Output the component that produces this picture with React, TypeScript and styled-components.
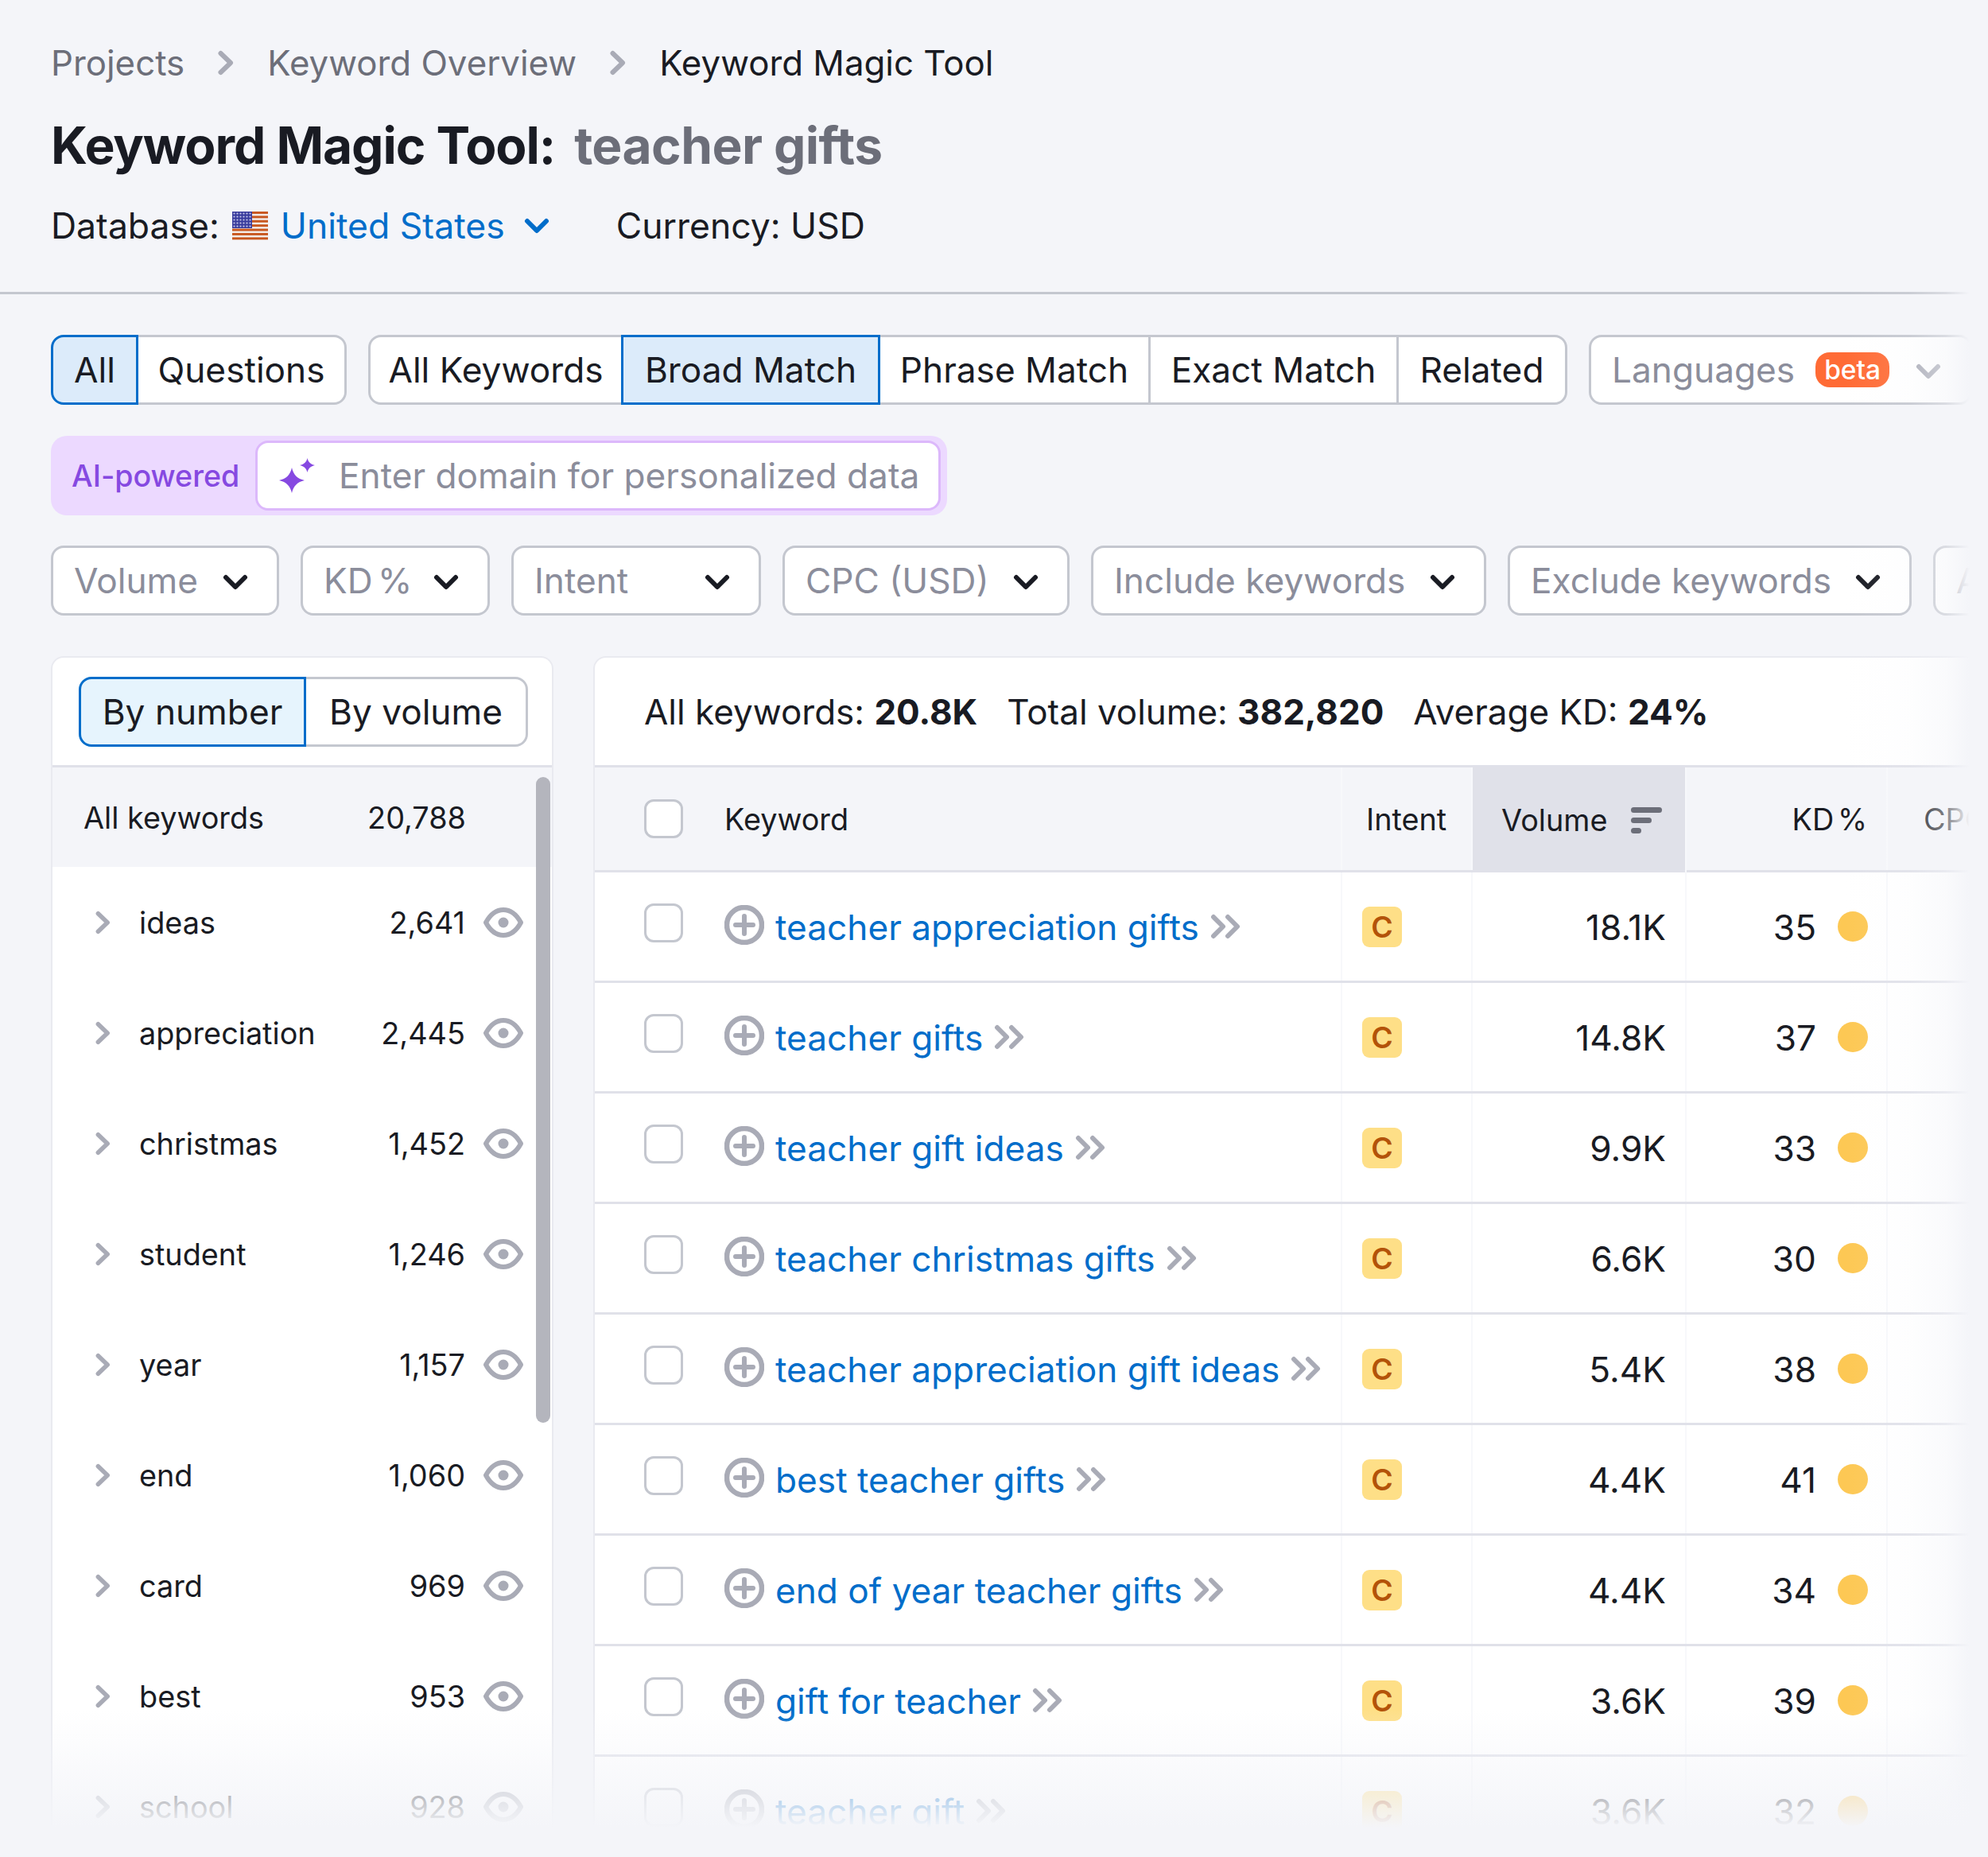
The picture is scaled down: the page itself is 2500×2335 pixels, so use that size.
import React from "react";
import styled, { createGlobalStyle } from "styled-components";

const INK = "#191b23";
const MUTED = "#6c6e79";
const HINT = "#8b8d9b";
const ICON = "#a9abb6";
const LINK = "#006dca";
const LINE = "#c4c7cf";
const SOFT = "#e0e1e9";
const BG = "#f4f5f9";
const BODY = "44.2px";
const SMALL = "37.8px";

const Global = createGlobalStyle`
  html, body { margin: 0; padding: 0; background: ${BG}; }
  body { font-family: Inter, "Liberation Sans", sans-serif; color: ${INK}; }
  * { box-sizing: border-box; }
`;

const Page = styled.div`
  position: relative;
  width: 2500px;
  height: 2335px;
  overflow: hidden;
  background: ${BG};
`;

const Header = styled.header`
  padding: 49px 0 53px 64px;
  border-bottom: 3px solid ${LINE};
`;

const Breadcrumbs = styled.nav`
  display: flex;
  align-items: center;
  height: 60px;
  font-size: 43.8px;
  gap: 42px;
`;

const Crumb = styled.span<{ $current?: boolean }>`
  color: ${(p) => (p.$current ? INK : MUTED)};
`;

const Title = styled.h1`
  display: flex;
  align-items: center;
  gap: 24px;
  height: 80px;
  margin: 33px 0 32px;
  font-size: 64px;
  font-weight: 700;
  letter-spacing: -1.05px;
`;

const TitleQuery = styled.span`
  color: ${MUTED};
  font-weight: 700;
  letter-spacing: -0.6px;
`;

const DbRow = styled.div`
  display: flex;
  align-items: center;
  height: 60px;
  font-size: 44.5px;
`;

const DbLink = styled.span`
  color: ${LINK};
  margin: 0 24px 0 16px;
`;

const FlagBox = styled.span`
  display: inline-flex;
  margin-left: 16px;
`;

const Currency = styled.span`
  margin-left: 84px;
`;

const Toolbar = styled.section`
  display: flex;
  flex-direction: column;
  padding: 51px 0 0 64px;
`;

const ToolRow = styled.div<{ $gap: number; $mb: number }>`
  display: flex;
  gap: ${(p) => p.$gap}px;
  margin-bottom: ${(p) => p.$mb}px;
`;

const SegGroup = styled.div`
  display: flex;
  height: 88px;
`;

const Seg = styled.div<{ $w: number; $active?: boolean; $tint?: string }>`
  position: relative;
  z-index: ${(p) => (p.$active ? 1 : 0)};
  display: flex;
  align-items: center;
  justify-content: center;
  width: ${(p) => p.$w}px;
  height: 100%;
  background: ${(p) => (p.$active ? p.$tint ?? "#dcebfa" : "#fff")};
  border: 3px solid ${(p) => (p.$active ? LINK : LINE)};
  font-size: ${BODY};
  color: ${INK};
  &:not(:first-child) { margin-left: -3px; }
  &:first-child { border-radius: 16px 0 0 16px; }
  &:last-child { border-radius: 0 16px 16px 0; }
`;

const Select = styled.div<{ $w: number }>`
  display: flex;
  align-items: center;
  justify-content: space-between;
  flex: none;
  width: ${(p) => p.$w}px;
  height: 88px;
  padding: 0 36px 0 26px;
  background: #fff;
  border: 3px solid ${LINE};
  border-radius: 16px;
  font-size: ${BODY};
  color: ${HINT};
  white-space: nowrap;
  svg { margin-top: 4px; }
`;

const TightLabel = styled.span<{ $tight?: boolean }>`
  word-spacing: ${(p) => (p.$tight ? "-6px" : "0")};
  white-space: nowrap;
`;

const LangLabel = styled.span`
  display: flex;
  align-items: center;
  gap: 26px;
`;

const Beta = styled.span`
  display: inline-flex;
  align-items: center;
  justify-content: center;
  width: 93px;
  height: 44px;
  border-radius: 18px;
  background: #ff6b35;
  color: #fff;
  font-size: 33.5px;
  font-weight: 500;
`;

const AiBox = styled.div`
  display: inline-flex;
  align-items: center;
  align-self: flex-start;
  width: 1127px;
  height: 100px;
  margin-bottom: 38px;
  padding: 0 8px 0 26px;
  background: #ecd9ff;
  border-radius: 20px;
`;

const AiLabel = styled.span`
  width: 231px;
  font-size: 37.6px;
  font-weight: 500;
  color: #8649e1;
`;

const AiInput = styled.div`
  display: flex;
  align-items: center;
  gap: 30px;
  width: 862px;
  height: 88px;
  padding-left: 27px;
  background: #fff;
  border: 3px solid #dcb8fb;
  border-radius: 16px;
  font-size: ${BODY};
  color: ${HINT};
  white-space: nowrap;
`;

const Panels = styled.main`
  display: flex;
  gap: 50px;
  margin: 0 0 0 64px;
  height: 1480px;
`;

const Sidebar = styled.aside`
  position: relative;
  flex: none;
  width: 632px;
  background: #fff;
  border: 2px solid #e9eaf0;
  border-bottom: none;
  border-radius: 16px 16px 0 0;
`;

const SideTop = styled.div`
  display: flex;
  height: 138px;
  padding: 24px 0 0 33px;
  border-bottom: 3px solid ${SOFT};
`;

const ScrollThumb = styled.div`
  position: absolute;
  top: 150px;
  right: 2px;
  width: 18px;
  height: 812px;
  border-radius: 9px;
  background: #b4b5bd;
`;

const AllRow = styled.div`
  display: grid;
  grid-template-columns: 1fr auto;
  align-items: center;
  height: 125px;
  padding: 0 108px 0 39px;
  background: ${BG};
  font-size: ${SMALL};
`;

const SideRow = styled.div`
  display: grid;
  grid-template-columns: 19px 1fr auto 49px;
  align-items: center;
  height: 139px;
  padding-left: 54px;
  padding-right: 37px;
  font-size: ${SMALL};
`;

const SideWord = styled.span`
  margin-left: 36px;
`;

const SideCount = styled.span`
  margin-right: 23px;
`;

const Main = styled.section`
  flex: 1;
  min-width: 0;
  background: #fff;
  border: 2px solid #e9eaf0;
  border-bottom: none;
  border-right: none;
  border-radius: 16px 0 0 0;
`;

const Summary = styled.div`
  display: flex;
  align-items: center;
  gap: 37px;
  height: 138px;
  padding-left: 62px;
  border-bottom: 3px solid ${SOFT};
  font-size: 44px;
`;

const Strong = styled.b`
  font-weight: 700;
`;

const TableRow = styled.div<{ $head?: boolean }>`
  display: grid;
  grid-template-columns: 940px 164px 269px 253px 1fr;
  height: ${(p) => (p.$head ? 132 : 139)}px;
  border-bottom: 3px solid ${SOFT};
  background: ${(p) => (p.$head ? BG : "#fff")};
  font-size: ${(p) => (p.$head ? SMALL : BODY)};
`;

const Cell = styled.div<{ $right?: boolean; $pad?: number; $sorted?: boolean }>`
  display: flex;
  align-items: center;
  min-width: 0;
  white-space: nowrap;
  overflow: hidden;
  justify-content: ${(p) => (p.$right ? "flex-end" : "flex-start")};
  padding: ${(p) =>
    p.$right ? `0 ${p.$pad ?? 0}px 0 0` : `0 0 0 ${p.$pad ?? 0}px`};
  border-right: 2px solid #f7f8fb;
  background: ${(p) => (p.$sorted ? SOFT : "transparent")};
  ${(p) => (p.$sorted ? "margin-bottom: -3px;" : "")}
`;

const CheckBox = styled.span<{ $nudge?: number }>`
  flex: none;
  width: 49px;
  height: 49px;
  margin-right: 52px;
  margin-bottom: ${(p) => p.$nudge ?? 0}px;
  background: #fff;
  border: 3px solid ${LINE};
  border-radius: 12px;
`;

const KeywordLink = styled.span`
  margin: 0 14px 0 14px;
  padding-top: 2px;
  color: ${LINK};
  white-space: nowrap;
`;

const ValueText = styled.span`
  padding-top: 2px;
`;

const IconSlot = styled.span<{ $nudge?: number }>`
  display: inline-flex;
  flex: none;
  margin-bottom: ${(p) => p.$nudge ?? 0}px;
`;

const IntentBadge = styled.span`
  display: flex;
  align-items: center;
  justify-content: center;
  width: 50px;
  height: 51px;
  border-radius: 9px;
  background: #fedf87;
  color: #b35309;
  font-size: 37.33px;
  font-weight: 600;
`;

const KdDot = styled.span`
  width: 38px;
  height: 38px;
  margin-left: 27px;
  border-radius: 50%;
  background: #fdc854;
`;

const SortedHead = styled.div`
  display: flex;
  align-items: center;
  justify-content: space-between;
  width: 100%;
  padding: 0 28px 0 36px;
`;

const RightFade = styled.div`
  position: absolute;
  top: 0;
  right: 0;
  bottom: 0;
  width: 180px;
  background: linear-gradient(
    to right,
    rgba(244, 245, 249, 0),
    rgba(244, 245, 249, 0.12) 45%,
    rgba(244, 245, 249, 0.45) 70%,
    ${BG} 87%
  );
  pointer-events: none;
`;

const BottomFade = styled.div`
  position: absolute;
  left: 0;
  right: 0;
  bottom: 0;
  height: 185px;
  background: linear-gradient(to bottom, rgba(244, 245, 249, 0), ${BG} 80%);
  pointer-events: none;
`;

const ChevronRight = ({ w = 20, h = 32 }: { w?: number; h?: number }) => (
  <svg width={w} height={h} viewBox="0 0 20 32" fill="none">
    <path d="M3.5 4 L16 16 L3.5 28" stroke={ICON} strokeWidth="6" strokeLinecap="round" strokeLinejoin="round" />
  </svg>
);

const ChevronDown = ({ color = INK }: { color?: string }) => (
  <svg width="32" height="20" viewBox="0 0 32 20" fill="none">
    <path d="M4 4 L16 16 L28 4" stroke={color} strokeWidth="6" strokeLinecap="round" strokeLinejoin="round" />
  </svg>
);

const DoubleChevron = () => (
  <svg width="40" height="32" viewBox="0 0 40 32" fill="none">
    <path d="M4 4 L16 16 L4 28 M22 4 L34 16 L22 28" stroke={ICON} strokeWidth="6" strokeLinecap="round" strokeLinejoin="round" />
  </svg>
);

const PlusCircle = () => (
  <svg width="50" height="50" viewBox="0 0 50 50" fill="none">
    <circle cx="25" cy="25" r="22" stroke={ICON} strokeWidth="6.5" />
    <path d="M25 14 V36 M14 25 H36" stroke={ICON} strokeWidth="6" strokeLinecap="round" />
  </svg>
);

const Eye = () => (
  <svg width="50" height="38" viewBox="0 0 50 38" fill="none">
    <path d="M3 19 C9 8 16 3 25 3 C34 3 41 8 47 19 C41 30 34 35 25 35 C16 35 9 30 3 19 Z" stroke={ICON} strokeWidth="6" strokeLinejoin="round" />
    <circle cx="25" cy="19" r="6.5" fill={ICON} />
  </svg>
);

const SortIcon = () => (
  <svg width="40" height="33" viewBox="0 0 40 33" fill={MUTED}>
    <rect x="0" y="0" width="39" height="7" rx="3.5" />
    <rect x="0" y="13" width="26" height="7" rx="3.5" />
    <rect x="0" y="26" width="13" height="7" rx="3.5" />
  </svg>
);

const Sparkle = () => (
  <svg width="45" height="44" viewBox="0 0 45 44" fill="#8649e1">
    <path d="M16 12 C18 21 23 26 32 28 C23 30 18 35 16 44 C14 35 9 30 0 28 C9 26 14 21 16 12 Z" />
    <path d="M35.5 0 C36.5 5 40 8 45 9 C40 10 36.5 13 35.5 18 C34.5 13 31 10 26 9 C31 8 34.5 5 35.5 0 Z" />
  </svg>
);

const Flag = () => {
  const stars = [];
  for (let r = 0; r < 5; r++) {
    for (let c = 0; c < 6; c++) {
      stars.push(<circle key={`${r}-${c}`} cx={2.5 + c * 4} cy={2.5 + r * 4} r="1.1" fill="#c9c9ea" />);
    }
  }
  return (
    <svg width="45" height="36" viewBox="0 0 45 36">
      <rect width="45" height="36" fill="#f3ece8" />
      {[0, 1, 2, 3, 4, 5, 6].map((i) => (
        <rect key={i} y={i * 5.4} width="45" height="2.9" fill="#c8571f" />
      ))}
      <rect width="25" height="21" fill="#3c3f9f" />
      {stars}
    </svg>
  );
};

const sideItems: [string, string][] = [
  ["ideas", "2,641"],
  ["appreciation", "2,445"],
  ["christmas", "1,452"],
  ["student", "1,246"],
  ["year", "1,157"],
  ["end", "1,060"],
  ["card", "969"],
  ["best", "953"],
  ["school", "928"],
];

const rows: [string, string, string][] = [
  ["teacher appreciation gifts", "18.1K", "35"],
  ["teacher gifts", "14.8K", "37"],
  ["teacher gift ideas", "9.9K", "33"],
  ["teacher christmas gifts", "6.6K", "30"],
  ["teacher appreciation gift ideas", "5.4K", "38"],
  ["best teacher gifts", "4.4K", "41"],
  ["end of year teacher gifts", "4.4K", "34"],
  ["gift for teacher", "3.6K", "39"],
  ["teacher gift", "3.6K", "32"],
];

const filters: [string, number][] = [
  ["Volume", 287],
  ["KD %", 238],
  ["Intent", 314],
  ["CPC (USD)", 361],
  ["Include keywords", 497],
  ["Exclude keywords", 508],
  ["Advanced filters", 420],
];

export default function App() {
  return (
    <Page>
      <Global />
      <Header>
        <Breadcrumbs>
          <Crumb>Projects</Crumb>
          <ChevronRight />
          <Crumb>Keyword Overview</Crumb>
          <ChevronRight />
          <Crumb $current>Keyword Magic Tool</Crumb>
        </Breadcrumbs>
        <Title>
          <span>Keyword Magic Tool:</span>
          <TitleQuery>teacher gifts</TitleQuery>
        </Title>
        <DbRow>
          <span>Database:</span>
          <FlagBox>
            <Flag />
          </FlagBox>
          <DbLink>United States</DbLink>
          <ChevronDown color={LINK} />
          <Currency>Currency: USD</Currency>
        </DbRow>
      </Header>

      <Toolbar>
        <ToolRow $gap={27} $mb={39}>
          <SegGroup>
            <Seg $w={110} $active>All</Seg>
            <Seg $w={265}>Questions</Seg>
          </SegGroup>
          <SegGroup>
            <Seg $w={321}>All Keywords</Seg>
            <Seg $w={326} $active>Broad Match</Seg>
            <Seg $w={343}>Phrase Match</Seg>
            <Seg $w={315}>Exact Match</Seg>
            <Seg $w={215}>Related</Seg>
          </SegGroup>
          <Select $w={482}>
            <LangLabel>
              Languages
              <Beta>beta</Beta>
            </LangLabel>
            <ChevronDown color={ICON} />
          </Select>
        </ToolRow>

        <AiBox>
          <AiLabel>AI-powered</AiLabel>
          <AiInput>
            <Sparkle />
            <span>Enter domain for personalized data</span>
          </AiInput>
        </AiBox>

        <ToolRow $gap={27} $mb={51}>
          {filters.map(([label, w]) => (
            <Select key={label} $w={w}>
              <TightLabel $tight={label === "KD %"}>{label}</TightLabel>
              <ChevronDown />
            </Select>
          ))}
        </ToolRow>
      </Toolbar>

      <Panels>
        <Sidebar>
          <SideTop>
            <SegGroup>
              <Seg $w={286} $active $tint="#e6f4fd">By number</Seg>
              <Seg $w={282}>By volume</Seg>
            </SegGroup>
          </SideTop>
          <AllRow>
            <span>All keywords</span>
            <span>20,788</span>
          </AllRow>
          {sideItems.map(([word, count]) => (
            <SideRow key={word}>
              <ChevronRight w={19} h={30} />
              <SideWord>{word}</SideWord>
              <SideCount>{count}</SideCount>
              <Eye />
            </SideRow>
          ))}
          <ScrollThumb />
        </Sidebar>

        <Main>
          <Summary>
            <span>All keywords: <Strong>20.8K</Strong></span>
            <span>Total volume: <Strong>382,820</Strong></span>
            <span>Average KD: <Strong>24%</Strong></span>
          </Summary>
          <TableRow $head>
            <Cell $pad={62}>
              <CheckBox />
              <span>Keyword</span>
            </Cell>
            <Cell $pad={30}>Intent</Cell>
            <Cell $sorted>
              <SortedHead>
                <span>Volume</span>
                <SortIcon />
              </SortedHead>
            </Cell>
            <Cell $right $pad={24}>
              <TightLabel $tight>KD %</TightLabel>
            </Cell>
            <Cell $pad={45}>CPC (USD)</Cell>
          </TableRow>
          {rows.map(([kw, vol, kd]) => (
            <TableRow key={kw}>
              <Cell $pad={62}>
                <CheckBox $nudge={10} />
                <IconSlot $nudge={4}>
                  <PlusCircle />
                </IconSlot>
                <KeywordLink>{kw}</KeywordLink>
                <DoubleChevron />
              </Cell>
              <Cell $pad={25}>
                <IntentBadge>C</IntentBadge>
              </Cell>
              <Cell $right $pad={24}>
                <ValueText>{vol}</ValueText>
              </Cell>
              <Cell $right $pad={23}>
                <ValueText>{kd}</ValueText>
                <KdDot />
              </Cell>
              <Cell />
            </TableRow>
          ))}
        </Main>
      </Panels>

      <RightFade />
      <BottomFade />
    </Page>
  );
}
